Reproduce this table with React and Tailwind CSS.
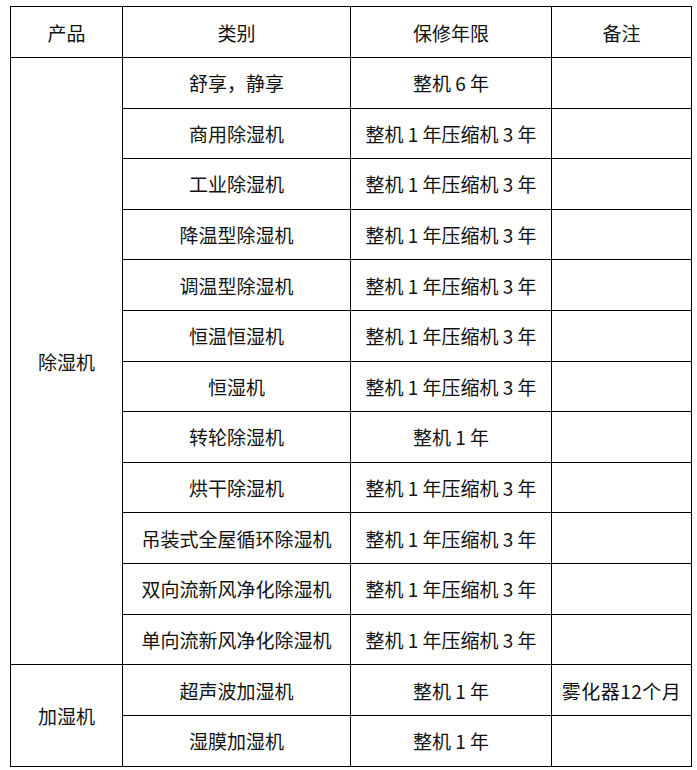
import React from "react";

const dehumidifiers = [
    ["舒享，静享", "整机 6 年"],
    ["商用除湿机", "整机 1 年压缩机 3 年"],
    ["工业除湿机", "整机 1 年压缩机 3 年"],
    ["降温型除湿机", "整机 1 年压缩机 3 年"],
    ["调温型除湿机", "整机 1 年压缩机 3 年"],
    ["恒温恒湿机", "整机 1 年压缩机 3 年"],
    ["恒湿机", "整机 1 年压缩机 3 年"],
    ["转轮除湿机", "整机 1 年"],
    ["烘干除湿机", "整机 1 年压缩机 3 年"],
    ["吊装式全屋循环除湿机", "整机 1 年压缩机 3 年"],
    ["双向流新风净化除湿机", "整机 1 年压缩机 3 年"],
    ["单向流新风净化除湿机", "整机 1 年压缩机 3 年"],
];

const humidifiers = [
    ["超声波加湿机", "整机 1 年", "雾化器12个月"],
    ["湿膜加湿机", "整机 1 年", ""],
];

const App = () => {
    const cell = "border border-black text-center align-middle p-0";

    return (
        <div className="bg-white min-h-[770px] pt-[6px] pl-[10px]" style={{ fontFamily: '"Noto Sans CJK SC", "Microsoft YaHei", sans-serif' }}>
            <table className="border-collapse table-fixed w-[681px] text-[19px] text-[#111] leading-none">
                <colgroup>
                    <col className="w-[112px]" />
                    <col className="w-[228px]" />
                    <col className="w-[201px]" />
                    <col className="w-[140px]" />
                </colgroup>
                <thead>
                    <tr className="h-[51px]">
                        <th className={cell + " font-normal"}>产品</th>
                        <th className={cell + " font-normal"}>类别</th>
                        <th className={cell + " font-normal"}>保修年限</th>
                        <th className={cell + " font-normal"}>备注</th>
                    </tr>
                </thead>
                <tbody>
                    {dehumidifiers.map((row, i) => (
                        <tr key={row[0]} className="h-[50.6px]">
                            {i === 0 && (
                                <td rowSpan={dehumidifiers.length} className={cell}>除湿机</td>
                            )}
                            <td className={cell}>{row[0]}</td>
                            <td className={cell}>{row[1]}</td>
                            <td className={cell}></td>
                        </tr>
                    ))}
                    {humidifiers.map((row, i) => (
                        <tr key={row[0]} className="h-[50.8px]">
                            {i === 0 && (
                                <td rowSpan={humidifiers.length} className={cell}>加湿机</td>
                            )}
                            <td className={cell}>{row[0]}</td>
                            <td className={cell}>{row[1]}</td>
                            <td className={cell + " tracking-[0.5px]"}>{row[2]}</td>
                        </tr>
                    ))}
                </tbody>
            </table>
        </div>
    );
};

export default App;
